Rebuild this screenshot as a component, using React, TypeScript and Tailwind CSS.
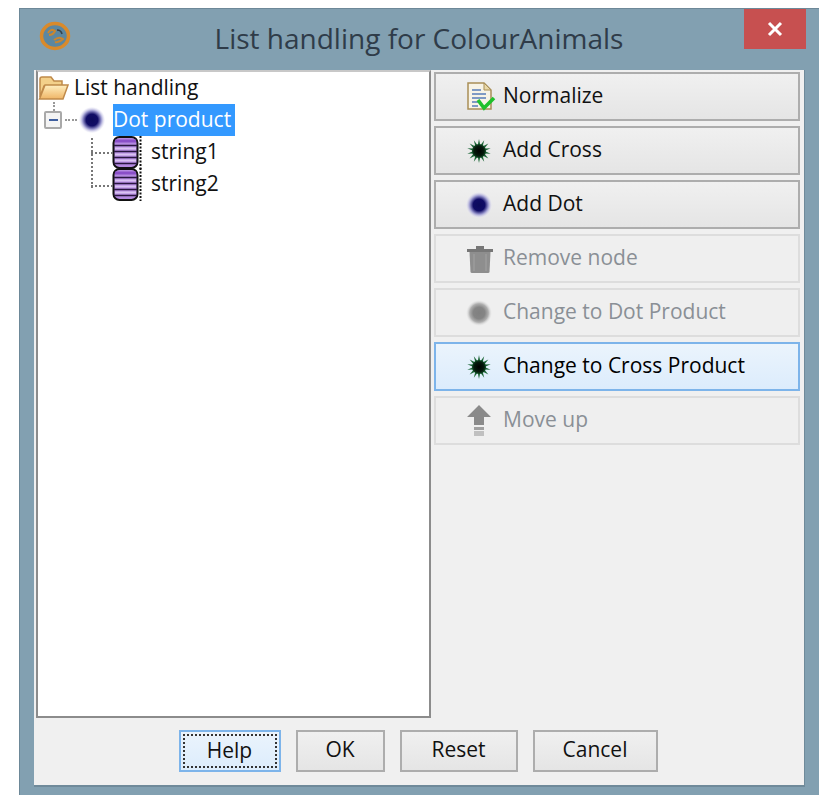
import type { ReactNode } from "react";

const uiFont = "font-['Open_Sans','Noto_Sans',sans-serif]";

function DotIcon({ grey = false }: { grey?: boolean }) {
  const id = grey ? "dot-grey" : "dot-blue";
  return (
    <svg width="26" height="26" viewBox="0 0 26 26">
      <defs>
        <radialGradient id={id}>
          <stop offset="0" stopColor={grey ? "#808080" : "#0c0a5c"} />
          <stop offset="0.45" stopColor={grey ? "#858585" : "#100c66"} />
          <stop offset="0.72" stopColor={grey ? "#b0b0b0" : "#9a98cf"} />
          <stop offset="1" stopColor={grey ? "#eeeeee" : "#e9e8f6"} stopOpacity="0.2" />
        </radialGradient>
      </defs>
      <circle cx="13" cy="13" r="13" fill={`url(#${id})`} />
    </svg>
  );
}

function CrossIcon() {
  const spikes = Array.from({ length: 14 }, (_, i) => (i * 360) / 14);
  return (
    <svg width="26" height="26" viewBox="0 0 26 26">
      <defs>
        <radialGradient id="burst">
          <stop offset="0" stopColor="#000000" />
          <stop offset="0.7" stopColor="#041a0b" />
          <stop offset="1" stopColor="#0f4a24" />
        </radialGradient>
      </defs>
      {spikes.map((deg) => (
        <path key={deg} d="M10.6 13 L13 1 L15.4 13 Z" fill="#1c6636" transform={`rotate(${deg} 13 13)`} />
      ))}
      <circle cx="13" cy="13" r="7" fill="url(#burst)" />
    </svg>
  );
}

function NormalizeIcon() {
  return (
    <svg width="30" height="30" viewBox="0 0 30 30">
      <path d="M2 1 H18 L25 8 V27 H2 Z" fill="#f7f3e6" stroke="#a98f57" strokeWidth="1.5" />
      <path d="M18 1 V8 H25 Z" fill="#e9d9a8" stroke="#a98f57" strokeWidth="1" />
      <path d="M6 8 H15 M6 12 H20 M6 16 H20 M6 20 H14 M6 24 H12" stroke="#7f9ac4" strokeWidth="1.8" />
      <path d="M12 18 L18 26 L28 16" fill="none" stroke="#1fc12b" strokeWidth="3.6" />
    </svg>
  );
}

function TrashIcon() {
  return (
    <svg width="28" height="30" viewBox="0 0 28 30">
      <path d="M1 5 H27 V8 H1 Z M10 2 H18 V5 H10 Z" fill="#777777" />
      <path d="M3.5 8 H24.5 L23.5 28 Q23.4 29 22 29 H6 Q4.6 29 4.5 28 Z" fill="#8e8e8e" />
      <path d="M8 10 V27 M20 10 V27" stroke="#989898" strokeWidth="2" />
    </svg>
  );
}

function MoveUpIcon() {
  return (
    <svg width="26" height="32" viewBox="0 0 26 32">
      <path d="M13 0 L25 12 H18 V20 H8 V12 H1 Z" fill="#8a8a8a" />
      <rect x="8" y="22" width="10" height="3" fill="#a0a0a0" />
      <rect x="8" y="26" width="10" height="5" fill="#c0c0c0" />
    </svg>
  );
}

function FolderIcon() {
  return (
    <svg width="31" height="26" viewBox="0 0 31 26">
      <defs>
        <linearGradient id="folder" x1="0" y1="0" x2="0" y2="1">
          <stop offset="0" stopColor="#ffefc0" />
          <stop offset="1" stopColor="#efb566" />
        </linearGradient>
      </defs>
      <path d="M2 22 V4 Q2 2 4 2 H13 L16 6 H24 V11 H6 Z" fill="#f3d08a" stroke="#c08a4a" strokeWidth="1.5" />
      <path d="M1.5 24 L7 10 H30 L25 24 Z" fill="url(#folder)" stroke="#c08a4a" strokeWidth="1.5" />
    </svg>
  );
}

function BarrelIcon() {
  return (
    <svg width="30" height="33" viewBox="0 0 30 33">
      <rect x="1.5" y="1" width="24" height="31" rx="6" fill="#b48ae0" stroke="#111111" strokeWidth="2" />
      <path d="M3 5 H24" stroke="#8a4fc8" strokeWidth="3" />
      <path d="M2 9.5 H25 M2 15.5 H25 M2 21.5 H25 M2 27.5 H25" stroke="#2a1840" strokeWidth="1.6" />
      <path d="M3 12.5 H24 M3 18.5 H24 M3 24.5 H24" stroke="#d9c3f2" strokeWidth="2" />
      <path d="M28.5 0 V33" stroke="#111111" strokeWidth="2" strokeDasharray="2 1.5" />
    </svg>
  );
}

function AppLogo() {
  return (
    <svg width="32" height="30" viewBox="0 0 32 30">
      <ellipse cx="16" cy="15" rx="13.5" ry="12.5" fill="#5c87a0" stroke="#d98a2b" strokeWidth="3.5" />
      <path d="M9 12 Q12 7 16 10 Q14 14 10 14 M15 19 Q20 15 24 18 Q20 22 16 21" fill="none" stroke="#c9862f" strokeWidth="2" />
      <path d="M18 9 Q22 9 23 13" fill="none" stroke="#33424d" strokeWidth="1.6" />
    </svg>
  );
}

function ActionButton({
  icon,
  children,
  disabled = false,
  hot = false,
}: {
  icon: ReactNode;
  children: ReactNode;
  disabled?: boolean;
  hot?: boolean;
}) {
  const look = hot
    ? "border-[#7db4ea] bg-gradient-to-b from-[#ebf4fc] to-[#dcecfc] text-black"
    : disabled
      ? "border-[#dddddd] bg-[#efefef] text-[#8a8f96]"
      : "border-[#adadad] bg-gradient-to-b from-[#f0f0f0] to-[#e5e5e5] text-[#111111]";
  return (
    <button
      disabled={disabled}
      className={`flex h-[49px] w-[366px] items-center border-2 pl-[30px] text-[21px] ${look}`}
    >
      <span className="flex w-[37px] shrink-0 items-center justify-start">{icon}</span>
      <span className="pb-[2px]">{children}</span>
    </button>
  );
}

function FooterButton({ label, width, focused = false }: { label: string; width: string; focused?: boolean }) {
  return (
    <button
      className={`flex h-[42px] items-center justify-center border-2 pb-[2px] text-[21px] text-[#111111] ${width} ${
        focused
          ? "border-[#7db4ea] bg-gradient-to-b from-[#ebf4fc] to-[#dcecfc] px-[2px] pt-[2px]"
          : "border-[#adadad] bg-gradient-to-b from-[#f0f0f0] to-[#e5e5e5]"
      }`}
    >
      {focused ? (
        <span className="flex h-full w-full items-center justify-center border-2 border-dotted border-[#333333]">
          {label}
        </span>
      ) : (
        label
      )}
    </button>
  );
}

function TreePanel() {
  return (
    <div className="relative ml-[2px] h-[648px] w-[395px] border-2 border-b-[#8c8c8c] border-l-[#8c8c8c] border-r-[#8c8c8c] border-t-[#c8c8c8] bg-white text-[21px] text-[#111111]">
      {/* dotted guide lines between tree nodes */}
      <span className="absolute left-[15px] top-[30px] h-[9px] border-l-2 border-dotted border-[#999999]" />
      <span className="absolute left-[27px] top-[47px] w-[12px] border-t-2 border-dotted border-[#999999]" />
      <span className="absolute left-[53px] top-[66px] h-[50px] border-l-2 border-dotted border-[#777777]" />
      <span className="absolute left-[53px] top-[80px] w-[22px] border-t-2 border-dotted border-[#777777]" />
      <span className="absolute left-[53px] top-[113px] w-[22px] border-t-2 border-dotted border-[#777777]" />

      <div className="flex h-[32px] items-center">
        <FolderIcon />
        <span className="ml-[5px] pb-[1px]">List handling</span>
      </div>
      <div className="flex h-[32px] items-center pl-[6px]">
        <span className="flex h-[18px] w-[18px] items-center justify-center rounded-[2px] border-2 border-[#a9a9a9] bg-[#f4f4f4]">
          <span className="h-[2px] w-[9px] bg-[#3f5f9f]" />
        </span>
        <span className="ml-[17px]">
          <DotIcon />
        </span>
        <span className="ml-[8px] flex h-[32px] w-[122px] items-center bg-[#3399ff] pb-[1px] text-white">Dot product</span>
      </div>
      <div className="flex h-[32px] items-center pl-[74px]">
        <BarrelIcon />
        <span className="ml-[9px]">string1</span>
      </div>
      <div className="flex h-[32px] items-center pl-[74px]">
        <BarrelIcon />
        <span className="ml-[9px]">string2</span>
      </div>
    </div>
  );
}

export default function App() {
  return (
    <div className={`h-[795px] w-[819px] overflow-hidden bg-white pl-[19px] pt-2 ${uiFont}`}>
      <div className="flex h-[787px] flex-col border-l border-t border-[#6d8898] bg-[#82a0b1] pb-[8px] pl-[14px] pr-[14px]">
        <div className="relative flex h-[61px] shrink-0 items-center justify-center pb-[3px]">
          <span className="absolute left-[5px] top-[12px]">
            <AppLogo />
          </span>
          <h1 className="pr-[1px] text-[28px] font-normal text-[#2f3c49]">List handling for ColourAnimals</h1>
          <button className="absolute right-[-1px] top-0 flex h-[40px] w-[62px] items-center justify-center bg-[#c75050] text-white">
            <svg width="16" height="16" viewBox="0 0 16 16">
              <path d="M2 2 L14 14 M14 2 L2 14" stroke="#ffffff" strokeWidth="3" />
            </svg>
          </button>
        </div>

        <div className="flex flex-1 flex-col border-b-2 border-r border-[#6f8a9a] bg-[#f0f0f0]">
          <div className="flex">
            <TreePanel />
            <div className="flex flex-col gap-[5px] pl-[3px] pt-[2px]">
              <ActionButton icon={<NormalizeIcon />}>Normalize</ActionButton>
              <ActionButton icon={<CrossIcon />}>Add Cross</ActionButton>
              <ActionButton icon={<DotIcon />}>Add Dot</ActionButton>
              <ActionButton icon={<TrashIcon />} disabled>
                Remove node
              </ActionButton>
              <ActionButton icon={<DotIcon grey />} disabled>
                Change to Dot Product
              </ActionButton>
              <ActionButton icon={<CrossIcon />} hot>
                Change to Cross Product
              </ActionButton>
              <ActionButton icon={<MoveUpIcon />} disabled>
                Move up
              </ActionButton>
            </div>
          </div>

          <div className="flex justify-center gap-[15px] pr-[2px] pt-[12px]">
            <FooterButton label="Help" width="w-[102px]" focused />
            <FooterButton label="OK" width="w-[89px]" />
            <FooterButton label="Reset" width="w-[118px]" />
            <FooterButton label="Cancel" width="w-[125px]" />
          </div>
        </div>
      </div>
    </div>
  );
}
